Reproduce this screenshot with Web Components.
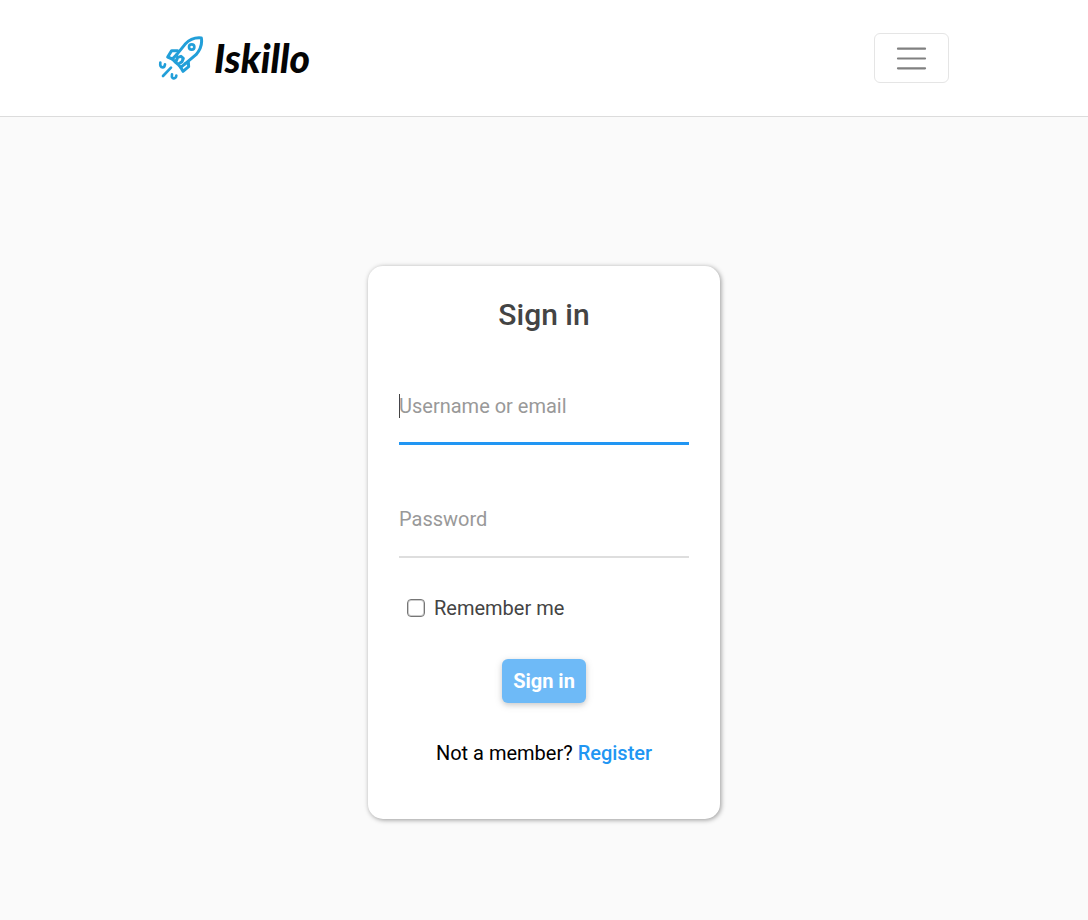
<!DOCTYPE html>
<html lang="en">
<head>
<meta charset="utf-8">
<meta name="viewport" content="width=device-width, initial-scale=1">
<title>Iskillo</title>
<style>
  body { margin: 0; background: #fafafa; font-family: Roboto, "Liberation Sans", sans-serif; }
</style>
</head>
<body>
<login-page></login-page>
<script>
const define = (name, html, setup) => customElements.define(name, class extends HTMLElement {
  constructor() {
    super();
    this.attachShadow({ mode: 'open' }).innerHTML = html;
  }
  connectedCallback() { if (setup) setup(this, this.shadowRoot); }
});

define('brand-logo', `
<style>
  :host { display: block; }
  a { display: flex; align-items: center; gap: 10px; color: #050505; text-decoration: none; }
  svg { display: block; width: 46px; height: 46px; }
  span { font: italic 900 39px/46px Lato, sans-serif; }
</style>
<a href="#">
  <svg viewBox="24 33 138 138" fill="none" stroke="#229fd9" stroke-width="9" stroke-linecap="round" stroke-linejoin="round" aria-hidden="true">
    <path d="M80 92 105 61C119 46 136 40 154 42C157 59 151 77 138 92L106 119"/>
    <circle cx="125" cy="69" r="8" stroke-width="8"/>
    <path d="M83 80H65L53 99 67 105 80 92M115 115 116 128 99 142 92 130 106 119"/>
    <path d="M83 100 93 97 100 103 96 113 84 121 77 115ZM67 105 77 115M84 121 92 130"/>
    <path d="M63 131 39 156M31 116Q29 130 38 130Q44 130 45 121M66 151Q64 164 72 163Q78 163 79 155" stroke-width="8"/>
  </svg>
  <span>Iskillo</span>
</a>`);

define('menu-toggle', `
<style>
  :host { display: block; }
  button { display: grid; place-items: center; width: 75px; height: 50px; padding: 0; border: 1px solid #e5e5e5; border-radius: 6px; background: transparent; cursor: pointer; }
  svg { display: block; width: 37px; height: 37px; }
</style>
<button type="button" aria-label="Toggle navigation">
  <svg viewBox="0 0 30 30" fill="none" stroke="#808080" stroke-width="1.7" stroke-linecap="round" stroke-miterlimit="10"><path d="M4 7h22M4 15h22M4 23h22"/></svg>
</button>`);

define('site-header', `
<style>
  :host { display: block; background: #fff; border-bottom: 1px solid #dcdcdc; }
  nav { display: flex; align-items: center; justify-content: space-between; max-width: 810px; margin: 0 auto; padding: 33px 0; }
  brand-logo { margin-left: 19px; }
</style>
<nav><brand-logo></brand-logo><menu-toggle></menu-toggle></nav>`);

define('text-field', `
<style>
  :host { display: block; }
  input { display: block; box-sizing: border-box; width: 100%; height: 51px; margin: 0; padding: 0 0 25px; border: 0; border-bottom: 2px solid #dedede; border-radius: 0; outline: 0; background: transparent; color: #444; font: 20px/24px Roboto, sans-serif; }
  input::placeholder { color: #999; opacity: 1; }
  input:focus { padding-bottom: 24px; border-bottom: 3px solid #2196f3; }
  input:focus:placeholder-shown { caret-color: transparent; background: linear-gradient(#444, #444) no-repeat 0 0 / 1px 24px; }
</style>
<input>`, (host, root) => {
  const input = root.querySelector('input');
  input.type = host.getAttribute('type') || 'text';
  input.name = host.getAttribute('name');
  input.placeholder = host.getAttribute('label');
  input.setAttribute('aria-label', host.getAttribute('label'));
  if (host.hasAttribute('focused')) input.focus();
});

define('check-field', `
<style>
  :host { display: block; }
  label { display: flex; align-items: center; gap: 9px; padding-left: 8px; color: #444; font-size: 20px; line-height: 24px; }
  input { appearance: none; box-sizing: border-box; width: 18px; height: 18px; margin: 0; border: 1px solid #767676; border-radius: 4px; background: #fff; box-shadow: inset 0 0 0 1px #ccc; }
  input:checked { background: #2196f3; }
</style>
<label><input type="checkbox"><slot></slot></label>`);

define('submit-button', `
<style>
  :host { display: block; }
  button { display: block; height: 44px; margin: 0 auto; padding: 0 11px; border: 0; border-radius: 6px; background: #2196f3; box-shadow: 0 2px 5px rgba(0,0,0,.22), 0 2px 8px rgba(0,0,0,.14); color: #fff; font: 700 20px/24px Roboto, sans-serif; opacity: .65; }
</style>
<button type="submit" disabled><slot></slot></button>`);

define('login-card', `
<style>
  :host { display: block; box-sizing: border-box; width: 100%; max-width: 352px; padding: 31px 31px 54px; border-radius: 15px; background: #fff; box-shadow: 1px 1px 5px rgba(0,0,0,.4); }
  form { display: flex; flex-direction: column; gap: 38px; }
  .fields { display: flex; flex-direction: column; gap: 62px; }
  .actions { display: flex; flex-direction: column; gap: 39px; }
  h1 { margin: 0; color: #444; font-size: 30px; font-weight: 500; line-height: 35px; text-align: center; }
  p { margin: 0; color: #000; font-size: 20px; line-height: 24px; text-align: center; }
  a { color: #2196f3; font-weight: 500; text-decoration: none; }
</style>
<form>
  <div class="fields">
    <h1>Sign in</h1>
    <text-field name="username" label="Username or email" focused></text-field>
    <text-field name="password" type="password" label="Password"></text-field>
  </div>
  <div class="actions">
    <check-field>Remember me</check-field>
    <submit-button>Sign in</submit-button>
  </div>
  <p>Not a member? <a href="#">Register</a></p>
</form>`);

define('login-page', `
<style>
  :host { display: flex; flex-direction: column; min-height: 100vh; }
  main { flex: 1; display: grid; align-items: start; justify-items: center; padding: 149px 16px 32px; }
</style>
<site-header></site-header>
<main><login-card></login-card></main>`);
</script>
</body>
</html>
